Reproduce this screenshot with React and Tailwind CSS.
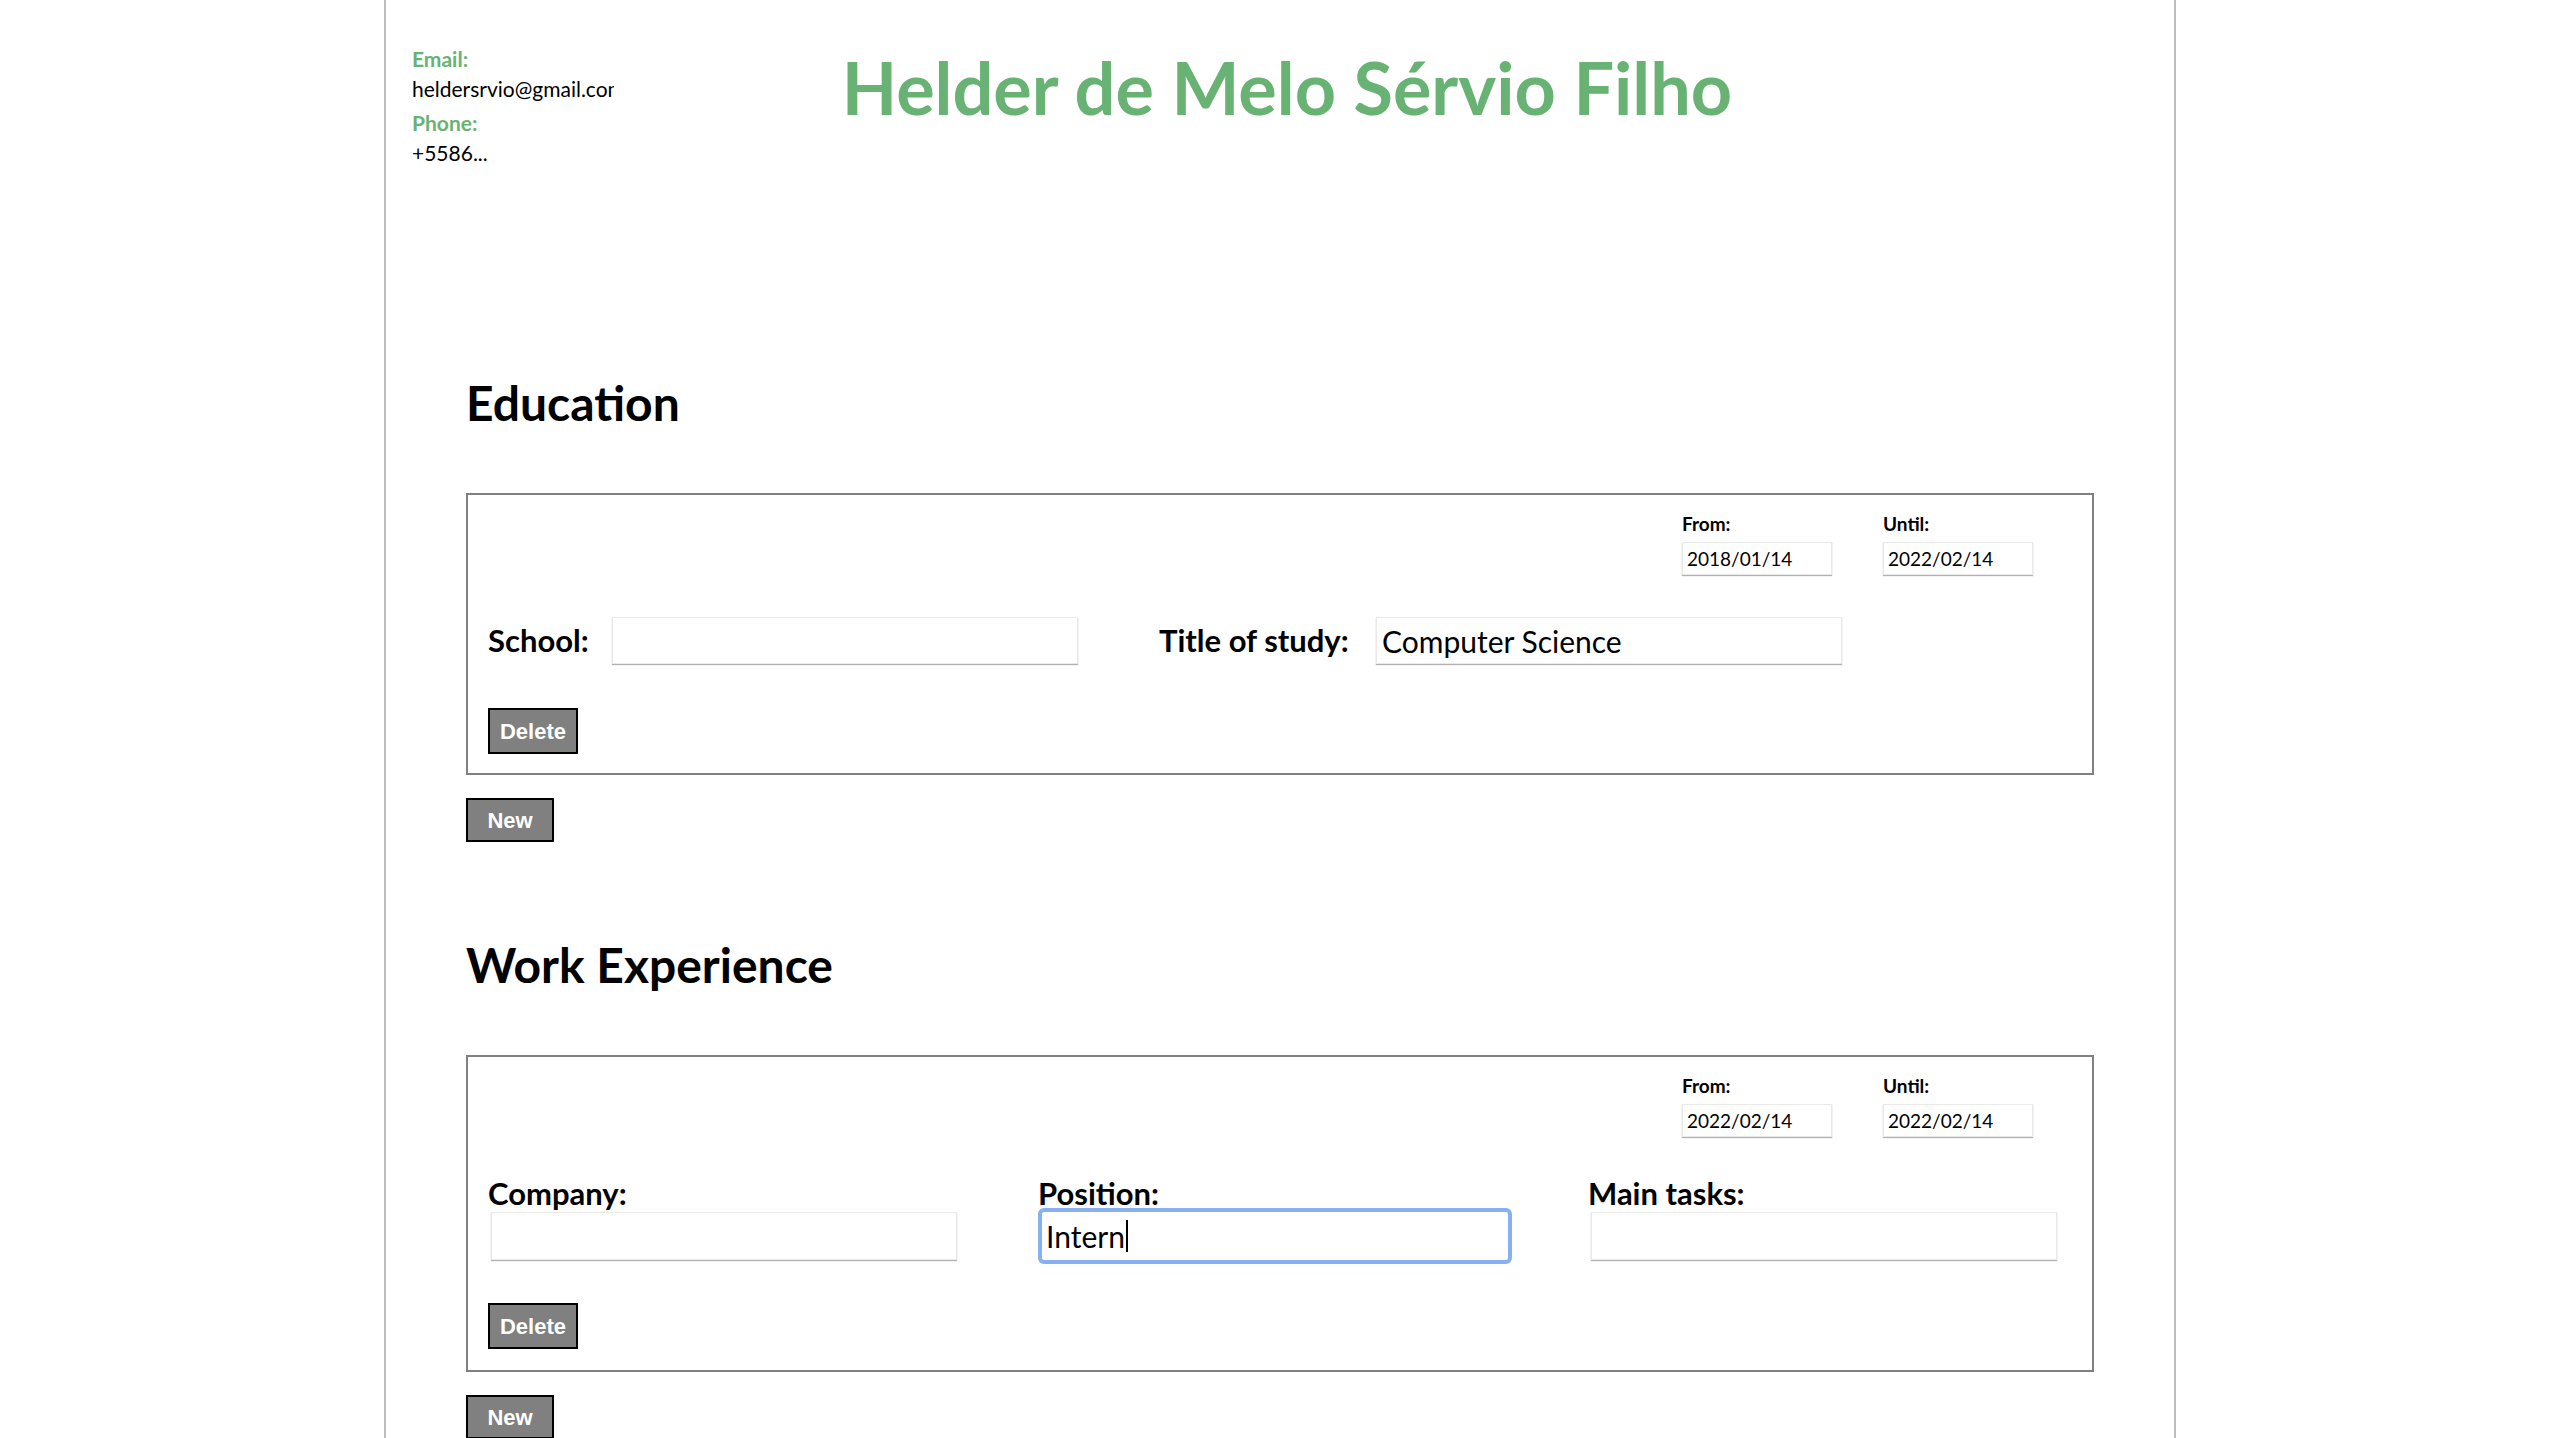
import React from 'react';

const fieldBase =
  'bg-white border border-[#e9e9e9] shadow-[0_1px_1px_rgba(0,0,0,0.3)] outline-none text-black';

const DateField = ({ label, value }) => (
  <div className="flex flex-col">
    <span className="text-[19px] font-bold leading-[24px]">{label}</span>
    <input
      readOnly
      value={value}
      className={`${fieldBase} mt-[6px] h-[33px] w-[150px] px-[4px] text-[19px]`}
    />
  </div>
);

const DateRow = ({ from, until }) => (
  <div className="flex justify-end gap-[51px] pr-[39px]">
    <DateField label="From:" value={from} />
    <DateField label="Until:" value={until} />
  </div>
);

const GrayButton = ({ children, className = '' }) => (
  <button
    className={`block bg-[#808080] border-2 border-black text-white font-bold text-[22px] font-['Liberation_Sans',Arial,sans-serif] ${className}`}
  >
    {children}
  </button>
);

const Education = () => (
  <section>
    <h2 className="mt-[211px] mb-[66px] text-[48px] font-bold leading-none">Education</h2>
    <div className="border-2 border-[#808080] px-[20px] pt-[17px] pb-[19px]">
      <DateRow from="2018/01/14" until="2022/02/14" />
      {/* school + title of study */}
      <div className="mt-[42px] flex items-center gap-[81px]">
        <div className="flex items-center">
          <span className="w-[124px] text-[31px] font-bold">School:</span>
          <input readOnly value="" className={`${fieldBase} h-[47px] w-[466px] px-[5px] text-[30px]`} />
        </div>
        <div className="flex items-center">
          <span className="w-[217px] text-[31px] font-bold">Title of study:</span>
          <input
            readOnly
            value="Computer Science"
            className={`${fieldBase} h-[47px] w-[466px] px-[5px] text-[30px]`}
          />
        </div>
      </div>
      <GrayButton className="mt-[44px] w-[90px] h-[46px]">Delete</GrayButton>
    </div>
    <GrayButton className="mt-[23px] w-[88px] h-[44px]">New</GrayButton>
  </section>
);

const WorkCol = ({ label, value = '', focused }) => (
  <div className="flex w-[469px] flex-col">
    <span className="text-[31px] font-bold leading-[36px]">{label}</span>
    {focused ? (
      <div className="ml-[4px] mt-[1px] flex h-[48px] w-[466px] items-center rounded-[2px] bg-white px-[4px] text-[30px] outline-[4px] outline-solid outline-[#87b0f3]">
        {value}
        <span className="ml-[1px] inline-block h-[32px] w-[2px] bg-black" />
      </div>
    ) : (
      <input
        readOnly
        value={value}
        className={`${fieldBase} ml-[3px] mt-[1px] h-[48px] w-[466px] px-[5px] text-[30px]`}
      />
    )}
  </div>
);

const Work = () => (
  <section>
    <h2 className="mt-[99px] mb-[66px] text-[48px] font-bold leading-none">Work Experience</h2>
    <div className="border-2 border-[#808080] px-[20px] pt-[17px] pb-[21px]">
      <DateRow from="2022/02/14" until="2022/02/14" />
      <div className="mt-[38px] flex gap-[81px]">
        <WorkCol label="Company:" />
        <WorkCol label="Position:" value="Intern" focused />
        <WorkCol label="Main tasks:" />
      </div>
      <GrayButton className="mt-[43px] w-[90px] h-[46px]">Delete</GrayButton>
    </div>
    <GrayButton className="mt-[23px] w-[88px] h-[44px]">New</GrayButton>
  </section>
);

export default function App() {
  return (
    <div className="min-h-screen bg-white font-['Lato',sans-serif] text-black">
      <div className="mx-auto min-h-screen w-[70%] border-x-2 border-[#bbbbbb] pb-[80px]">
        <header className="grid grid-cols-[1fr_auto_1fr] pl-[14px] pt-[44px]">
          <div className="flex flex-col pl-[12px]">
            <span className="text-[21px] font-bold leading-[30px] text-[#68b274]">Email:</span>
            <div className="w-[202px] overflow-hidden whitespace-nowrap text-[21px] leading-[30px]">
              heldersrvio@gmail.com
            </div>
            <span className="mt-1 text-[21px] font-bold leading-[30px] text-[#68b274]">Phone:</span>
            <span className="text-[21px] leading-[30px]">+5586...</span>
          </div>
          <h1 className="mt-[7px] self-start text-[72px] font-bold leading-none text-[#68b274]">
            Helder de Melo Sérvio Filho
          </h1>
          <div />
        </header>
        <main className="px-[80px]">
          <Education />
          <Work />
        </main>
      </div>
    </div>
  );
}
